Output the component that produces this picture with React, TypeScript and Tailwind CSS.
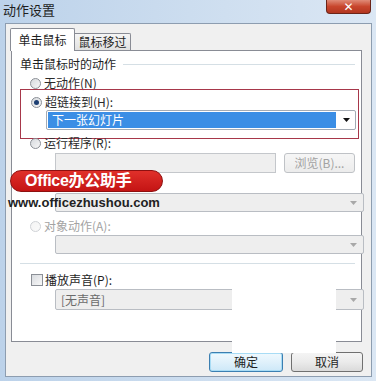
import React from 'react';

const FONT = '"Noto Sans CJK SC", "Liberation Sans", sans-serif';

function Radio({ checked = false, disabled = false }: { checked?: boolean; disabled?: boolean }) {
  return (
    <span
      className={
        'flex items-center justify-center w-[11px] h-[11px] rounded-full border shrink-0 ' +
        (disabled
          ? 'border-[#cfd2d6] bg-[linear-gradient(135deg,#f4f4f4,#fafafa)]'
          : 'border-[#8b8f96] bg-[linear-gradient(135deg,#d6d9dd,#f7f7f7)]')
      }
    >
      {checked && <span className="w-[5px] h-[5px] rounded-full bg-[#1d3f73]" />}
    </span>
  );
}

function Arrow({ dim }: { dim?: boolean }) {
  return (
    <svg width="7" height="4" viewBox="0 0 7 4">
      <path d="M0 0 H7 L3.5 4 Z" fill={dim ? '#a8a8a8' : '#111'} />
    </svg>
  );
}

function DisabledSelect({ h, text }: { h: string; text?: string }) {
  return (
    <div
      className={
        'ml-[35px] w-[309px] flex items-center justify-between border border-[#b9bdc3] rounded-[2px] bg-[#eeeeee] pl-[5px] pr-[6px] ' +
        h
      }
    >
      <span className="text-[12px] text-[#6a6a6a] leading-none">{text}</span>
      <Arrow dim />
    </div>
  );
}

function Option({
  label,
  checked,
  disabled,
  cls,
}: {
  label?: string;
  checked?: boolean;
  disabled?: boolean;
  cls: string;
}) {
  return (
    <div className={'flex items-center h-[14px] pl-[10px] gap-[3px] ' + cls}>
      <Radio checked={checked} disabled={disabled} />
      {label && (
        <span className={'text-[12px] leading-none ' + (disabled ? 'text-[#a3a3a3]' : 'text-[#2a2a2a]')}>{label}</span>
      )}
    </div>
  );
}

export default function App() {
  return (
    <div
      className="relative w-[376px] h-[381px] overflow-hidden bg-[linear-gradient(90deg,#bcd2ea,#cfdff0_60%,#dbe7f4)]"
      style={{ fontFamily: FONT }}
    >
      {/* title bar */}
      <div className="flex items-start justify-between h-[23px]">
        <span className="pl-[3px] pt-[2px] text-[13px] leading-[16px] text-[#1e1e1e]">动作设置</span>
        <div className="mr-[5px] w-[45px] h-[14px] rounded-b-[4px] border border-t-0 border-[#6b2418] bg-[linear-gradient(180deg,#e08b77,#c8462d_50%,#b23620)] flex items-center justify-center">
          <span className="text-white text-[12px] font-bold leading-none" style={{ fontFamily: '"DejaVu Sans", sans-serif' }}>
            ✕
          </span>
        </div>
      </div>

      {/* client area */}
      <div className="ml-[5px] w-[367px] h-[354px] border border-[#8d9db0] bg-[#f0f0f0] pl-[5px] pt-[4px]">
        {/* tabs */}
        <div className="flex items-end h-[22px]">
          <div className="relative z-10 -ml-px -mb-px w-[65px] h-[23px] bg-white border border-b-0 border-[#898c95] rounded-t-[2px] flex items-center justify-center">
            <span className="text-[12px] text-[#1e1e1e] leading-none">单击鼠标</span>
          </div>
          <div className="w-[56px] h-[17px] border border-b-0 border-l-0 border-[#898c95] rounded-tr-[2px] bg-[linear-gradient(180deg,#f5f5f5,#e1e1e1)] flex items-center justify-center">
            <span className="text-[12px] text-[#1e1e1e] leading-none">鼠标移过</span>
          </div>
        </div>

        {/* tab panel */}
        <div className="w-[351px] h-[292px] border border-[#898c95] bg-white pl-[8px] pr-[6px] flex flex-col">
          <div className="flex items-center h-[14px] mt-[6px]">
            <span className="text-[12px] leading-none text-[#1e1e1e]">单击鼠标时的动作</span>
            <div className="flex-1 ml-[7px] h-px bg-[#d5dfe5]" />
          </div>

          <Option label="无动作(N)" cls="mt-[5px]" />

          <div className="-mt-px w-[339px] h-[50px] border border-[#a7374a] shrink-0">
            <Option label="超链接到(H):" checked cls="mt-[5px] pl-[9px]" />
            <div className="ml-[25px] mt-px w-[310px] h-[20px] border border-[#a4abb4] rounded-[2px] bg-white flex items-center pl-px pr-[5px] justify-between">
              <div className="w-[288px] h-[16px] bg-[#3b8ee5] flex items-center pl-[4px]">
                <span className="text-[12px] text-white leading-none">下一张幻灯片</span>
              </div>
              <Arrow />
            </div>
          </div>

          <Option label="运行程序(R):" cls="-mt-[3px]" />

          <div className="flex items-center mt-[3px] h-[20px]">
            <div className="ml-[35px] w-[227px] h-[20px] border border-[#c4c7cb] bg-[#efefef]" />
            <div className="ml-[8px] w-[73px] h-[20px] border border-[#bfc2c6] rounded-[3px] bg-[linear-gradient(180deg,#f6f6f6,#ececec)] flex items-center justify-center">
              <span className="text-[12px] text-[#a2a2a2] leading-none">浏览(B)...</span>
            </div>
          </div>

          {/* row hidden under the watermark */}
          <Option disabled cls="mt-[2px]" />
          <div className="mt-[4px]">
            <DisabledSelect h="h-[19px]" />
          </div>

          <Option label="对象动作(A):" disabled cls="mt-[7px]" />
          <div className="mt-[2px]">
            <DisabledSelect h="h-[19px]" />
          </div>

          <div className="mt-[9px] h-px bg-[#d5dfe5]" />

          <div className="flex items-center h-[15px] mt-[8px] pl-[11px] gap-[2px]">
            <span className="w-[12px] h-[12px] border border-[#8b8f96] bg-[linear-gradient(135deg,#d8dbdf,#f8f8f8)] shrink-0" />
            <span className="text-[12px] leading-none text-[#1e1e1e]">播放声音(P):</span>
          </div>
          <div className="mt-[2px]">
            <DisabledSelect h="h-[21px]" text="[无声音]" />
          </div>
        </div>

        {/* buttons */}
        <div className="flex justify-end gap-[8px] mt-[10px] pr-[8px]">
          <div className="w-[74px] h-[20px] rounded-[3px] border border-[#3c7fb1] shadow-[inset_0_0_0_1px_#a8dcf5] bg-[linear-gradient(180deg,#f0f9fe,#e0f1fb_50%,#cde8f8)] flex items-center justify-center">
            <span className="text-[12px] leading-none text-[#1e1e1e]">确定</span>
          </div>
          <div className="w-[72px] h-[20px] rounded-[3px] border border-[#707070] bg-[linear-gradient(180deg,#f4f4f4,#ebebeb_50%,#dadada)] flex items-center justify-center">
            <span className="text-[12px] leading-none text-[#1e1e1e]">取消</span>
          </div>
        </div>
      </div>

      {/* watermark */}
      <div className="absolute left-[10px] top-[170px] w-[153px] h-[22px] rounded-full bg-[linear-gradient(180deg,#e0302a,#c41414)] border border-[#8e1010] flex items-center pl-[14px]">
        <span
          className="text-[16px] font-bold text-white leading-none tracking-[-0.3px]"
          style={{ fontFamily: '"Liberation Sans", "Noto Sans CJK SC", sans-serif' }}
        >
          Office办公助手
        </span>
      </div>
      <div
        className="absolute left-[8px] top-[195px] text-[13px] font-bold text-[#222] leading-[15px]"
        style={{ fontFamily: '"Liberation Sans", sans-serif' }}
      >
        www.officezhushou.com
      </div>

      {/* erased patch */}
      <div className="absolute left-[232px] top-[287px] w-[104px] h-[66px] bg-white" />
    </div>
  );
}
